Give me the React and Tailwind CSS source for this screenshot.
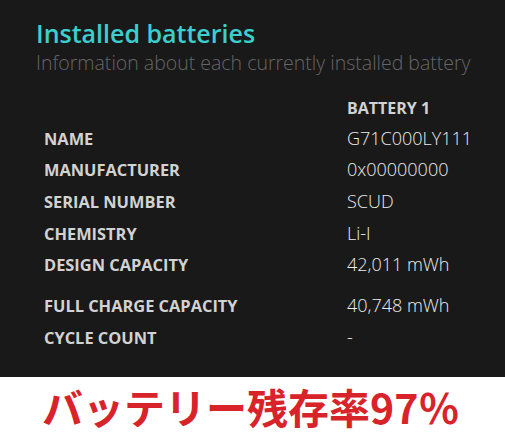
export default function App() {
    const rows = [
        ['NAME', 'G71C000LY111'],
        ['MANUFACTURER', '0x00000000'],
        ['SERIAL NUMBER', 'SCUD'],
        ['CHEMISTRY', 'Li-I'],
        ['DESIGN CAPACITY', '42,011 mWh'],
    ]
    const rows2 = [
        ['FULL CHARGE CAPACITY', '40,748 mWh'],
        ['CYCLE COUNT', '-'],
    ]

    const Row = ({ label, value }) => (
        <div className="flex items-baseline h-[31.7px]">
            <div className="w-[303px] text-[16.4px] font-bold text-[#d2d2d2]">{label}</div>
            <div className="text-[18px] text-[#ececec] font-light">{value}</div>
        </div>
    )

    return (
        <div className="w-[505px] h-[436px] flex flex-col" style={{ fontFamily: "'Open Sans', 'Noto Sans', sans-serif" }}>
            <div className="bg-[#191919] h-[377px] pl-[36px] pt-[17px]">
                {/* Header */}
                <h1 className="text-[25px] leading-[33px] font-semibold text-[#3dcfcf]">Installed batteries</h1>
                <p className="text-[19.5px] leading-[28px] font-light text-[#666666] mt-[-1px]">
                    Information about each currently installed battery
                </p>

                {/* Table */}
                <div className="pl-[8px] mt-[19px]">
                    <div className="flex items-baseline h-[28.5px]">
                        <div className="w-[303px]" />
                        <div className="text-[16px] font-bold text-[#d2d2d2]">BATTERY 1</div>
                    </div>
                    {rows.map(([l, v]) => <Row key={l} label={l} value={v} />)}
                    <div className="h-[9px]" />
                    {rows2.map(([l, v]) => <Row key={l} label={l} value={v} />)}
                </div>
            </div>

            {/* Caption */}
            <div className="flex-1 bg-white pl-[42px] flex items-center">
                <p className="text-[41px] leading-none font-bold text-[#d8232a]"
                    style={{ fontFamily: "'Noto Sans CJK JP', sans-serif" }}>
                    バッテリー残存率97％
                </p>
            </div>
        </div>
    )
}
